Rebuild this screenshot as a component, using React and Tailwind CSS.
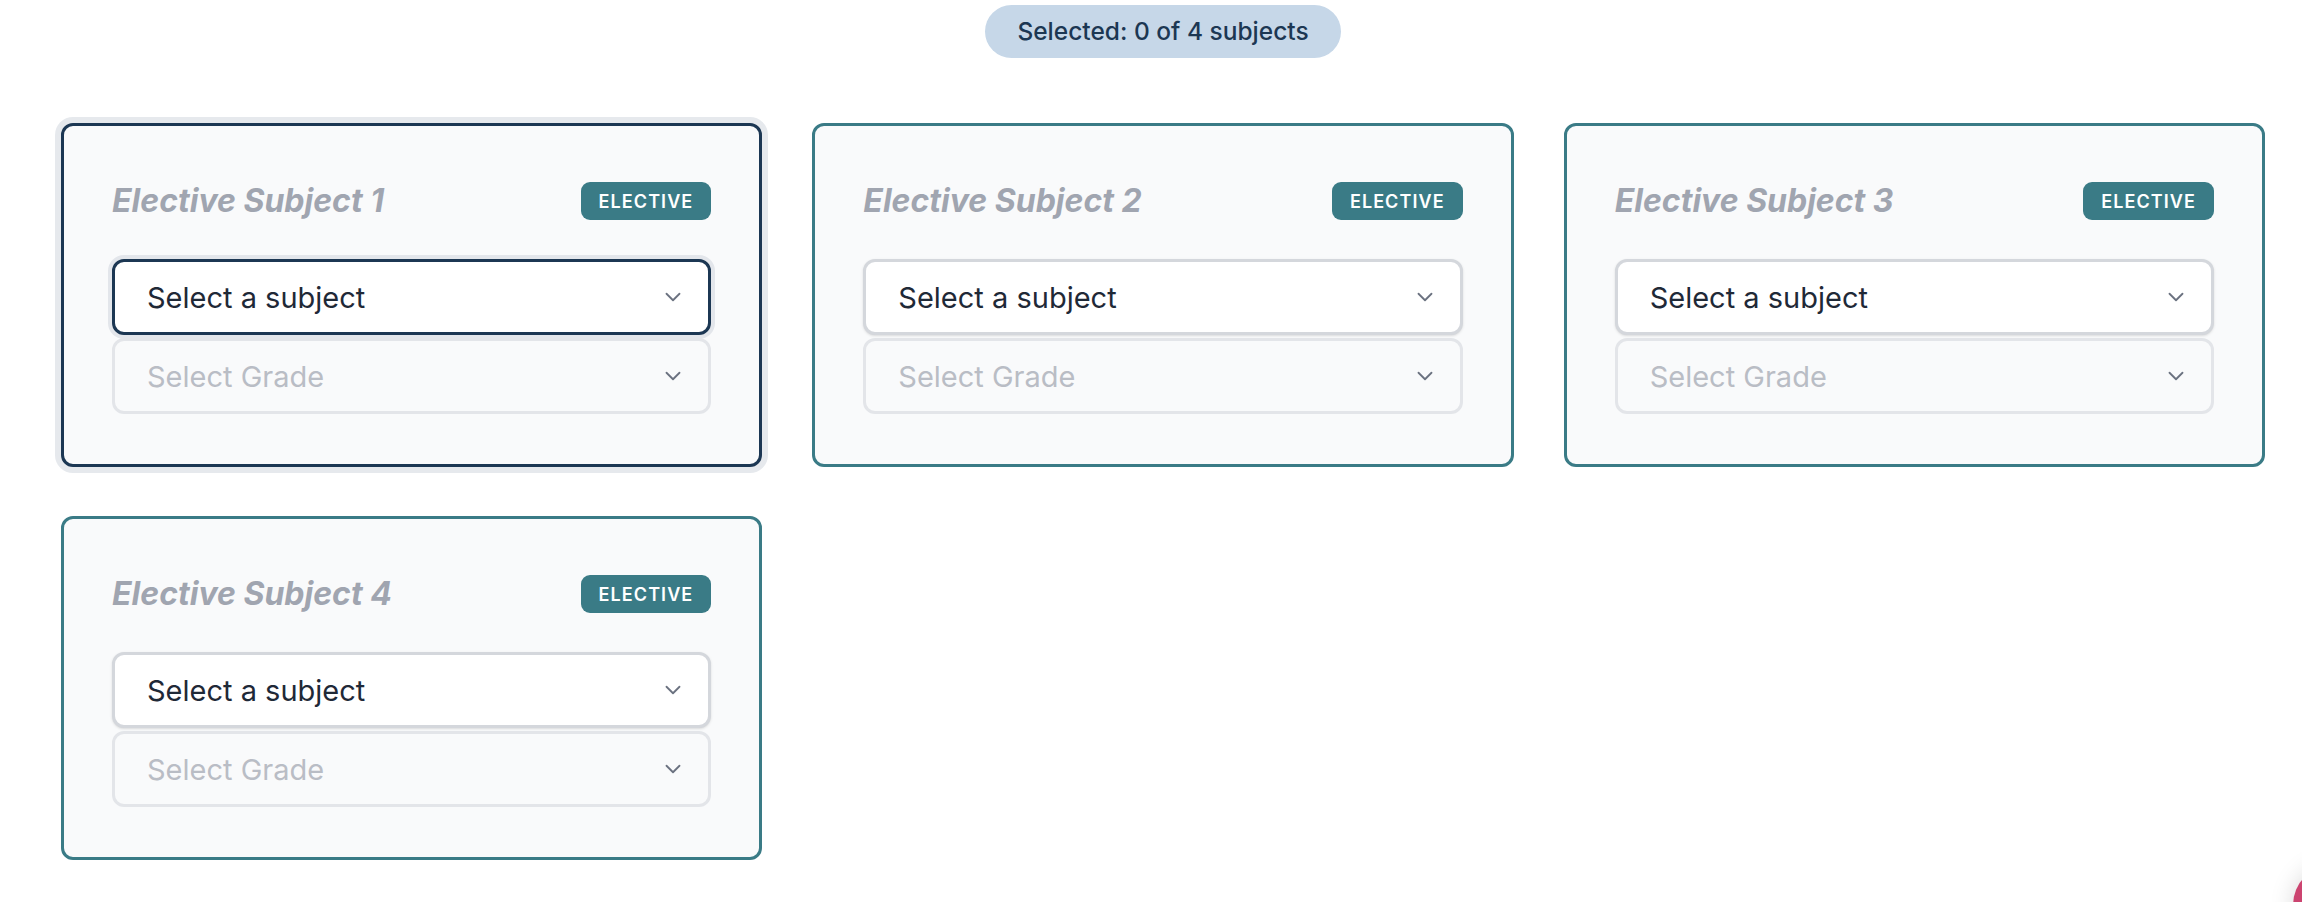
import React from "react";
import { ChevronDown } from "lucide-react";

function SelectBox({ label, focused, disabled }) {
  const base =
    "flex h-[76px] items-center justify-between rounded-[12px] border-[3px] pl-[32px] pr-[22px]";
  let cls;
  if (disabled) {
    cls = `${base} border-[#e3e5e9] bg-[#f9fafb] text-[#b9bdc5]`;
  } else if (focused) {
    cls = `${base} border-[#1c3753] bg-white text-[#1f2937] ring-[4px] ring-[#e3e6eb] shadow-sm`;
  } else {
    cls = `${base} border-[#d4d7dc] bg-white text-[#1f2937] shadow-sm`;
  }
  return (
    <div className={cls}>
      <span className="text-[29px] leading-none">{label}</span>
      <ChevronDown size={26} strokeWidth={1.7} className="text-[#6b7280]" />
    </div>
  );
}

function Card({ n, focused }) {
  return (
    <div
      className={
        "rounded-[12px] border-[3px] bg-[#f9fafb] px-[48px] pt-[46px] pb-[50px] " +
        (focused
          ? "border-[#1c3753] ring-[6px] ring-[#e6e9ed]"
          : "border-[#3a7b86]")
      }
    >
      <div className="flex h-[58px] items-center justify-between">
        <span className="text-[32px] font-bold italic leading-none text-[#a0a5b0]">
          Elective Subject {n}
        </span>
        <span className="flex h-[38px] items-center rounded-[9px] bg-[#3a7b86] px-[18px] text-[18px] font-semibold tracking-[0.06em] text-white">
          ELECTIVE
        </span>
      </div>
      <div className="mt-[29px] flex flex-col gap-[3px]">
        <SelectBox label="Select a subject" focused={focused} />
        <SelectBox label="Select Grade" disabled />
      </div>
    </div>
  );
}

export default function App() {
  return (
    <div
      className="min-h-[902px] bg-white pl-[61px] pr-[37px] pt-[5px]"
      style={{ fontFamily: "Inter, 'Noto Sans', sans-serif" }}
    >
      <div className="flex justify-center">
        <div className="flex h-[53px] items-center rounded-full bg-[#c6d7e8] px-[32px] text-[24.5px] font-medium text-[#1c3753]">
          Selected: 0 of 4 subjects
        </div>
      </div>
      <div className="mt-[65px] grid grid-cols-3 gap-x-[50px] gap-y-[49px]">
        <Card n={1} focused />
        <Card n={2} />
        <Card n={3} />
        <Card n={4} />
      </div>
      <div className="fixed left-[2293px] top-[865px] h-[80px] w-[80px] rounded-full bg-[#cc4470] shadow-[0_0_24px_rgba(0,0,0,0.15)]" />
    </div>
  );
}
